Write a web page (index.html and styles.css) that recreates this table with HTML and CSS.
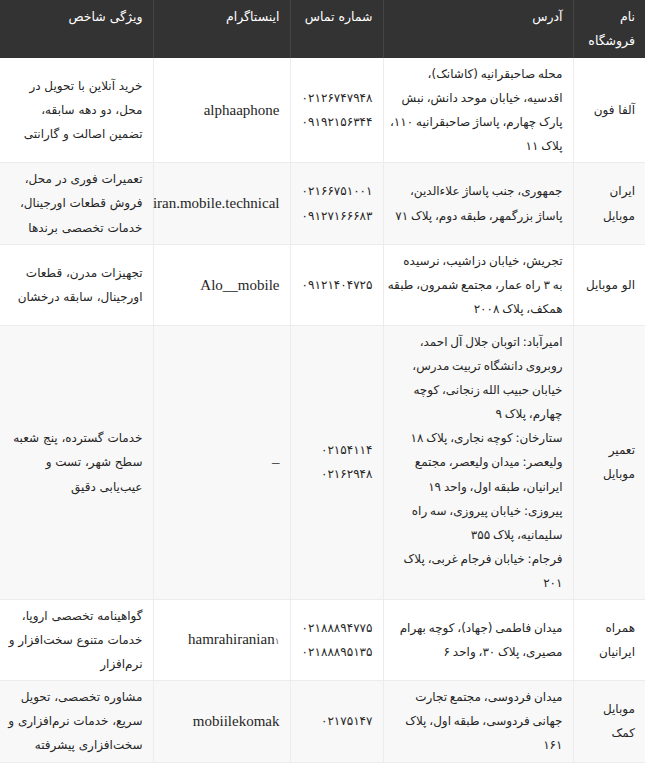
FILE: index.html
```html
<!DOCTYPE html>
<html lang="fa" dir="rtl">
<head>
<meta charset="utf-8">
<title>فروشگاه‌های موبایل</title>
<link rel="stylesheet" href="styles.css">
</head>
<body>
<table class="shops">
  <colgroup>
    <col class="col-name">
    <col class="col-addr">
    <col class="col-phone">
    <col class="col-insta">
    <col class="col-feat">
  </colgroup>
  <thead>
    <tr>
      <th>نام فروشگاه</th>
      <th>آدرس</th>
      <th>شماره تماس</th>
      <th>اینستاگرام</th>
      <th>ویژگی شاخص</th>
    </tr>
  </thead>
  <tbody>
    <tr>
      <td>آلفا فون</td>
      <td class="addr">محله صاحبقرانیه (کاشانک)،<br>اقدسیه، خیابان موحد دانش، نبش<br>پارک چهارم، پاساژ صاحبقرانیه ۱۱۰،<br>پلاک ۱۱</td>
      <td class="phone">۰۲۱۲۶۷۴۷۹۴۸<br>۰۹۱۹۲۱۵۶۳۴۴</td>
      <td class="insta">alphaaphone</td>
      <td>خرید آنلاین با تحویل در<br>محل، دو دهه سابقه،<br>تضمین اصالت و گارانتی</td>
    </tr>
    <tr>
      <td>ایران<br>موبایل</td>
      <td class="addr">جمهوری، جنب پاساژ علاءالدین،<br>پاساژ بزرگمهر، طبقه دوم، پلاک ۷۱</td>
      <td class="phone">۰۲۱۶۶۷۵۱۰۰۱<br>۰۹۱۲۷۱۶۶۶۸۳</td>
      <td class="insta">iran.mobile.technical</td>
      <td>تعمیرات فوری در محل،<br>فروش قطعات اورجینال،<br>خدمات تخصصی برندها</td>
    </tr>
    <tr>
      <td>الو موبایل</td>
      <td class="addr">تجریش، خیابان دزاشیب، نرسیده<br>به ۳ راه عمار، مجتمع شمرون، طبقه<br>همکف، پلاک ۲۰۰۸</td>
      <td class="phone">۰۹۱۲۱۴۰۴۷۲۵</td>
      <td class="insta">Alo__mobile</td>
      <td>تجهیزات مدرن، قطعات<br>اورجینال، سابقه درخشان</td>
    </tr>
    <tr>
      <td>تعمیر<br>موبایل</td>
      <td class="addr">امیرآباد: اتوبان جلال آل احمد،<br>روبروی دانشگاه تربیت مدرس،<br>خیابان حبیب الله زنجانی، کوچه<br>چهارم، پلاک ۹<br>ستارخان: کوچه نجاری، پلاک ۱۸<br>ولیعصر: میدان ولیعصر، مجتمع<br>ایرانیان، طبقه اول، واحد ۱۹<br>پیروزی: خیابان پیروزی، سه راه<br>سلیمانیه، پلاک ۳۵۵<br>فرجام: خیابان فرجام غربی، پلاک<br>۲۰۱</td>
      <td class="phone">۰۲۱۵۴۱۱۴<br>۰۲۱۶۲۹۴۸</td>
      <td class="insta">–</td>
      <td>خدمات گسترده، پنج شعبه<br>سطح شهر، تست و<br>عیب‌یابی دقیق</td>
    </tr>
    <tr>
      <td>همراه<br>ایرانیان</td>
      <td class="addr">میدان فاطمی (جهاد)، کوچه بهرام<br>مصیری، پلاک ۳۰، واحد ۶</td>
      <td class="phone">۰۲۱۸۸۸۹۴۷۷۵<br>۰۲۱۸۸۸۹۵۱۳۵</td>
      <td class="insta">hamrahiranian<span class="mark">۱</span></td>
      <td>گواهینامه تخصصی اروپا،<br>خدمات متنوع سخت‌افزار و<br>نرم‌افزار</td>
    </tr>
    <tr>
      <td>موبایل<br>کمک</td>
      <td class="addr">میدان فردوسی، مجتمع تجارت<br>جهانی فردوسی، طبقه اول، پلاک<br>۱۶۱</td>
      <td class="phone">۰۲۱۷۵۱۴۷</td>
      <td class="insta">mobiilekomak</td>
      <td>مشاوره تخصصی، تحویل<br>سریع، خدمات نرم‌افزاری و<br>سخت‌افزاری پیشرفته</td>
    </tr>
  </tbody>
</table>
</body>
</html>
```
FILE: styles.css
```css
html, body {
  margin: 0;
  padding: 0;
  background: #ffffff;
}

body {
  font-family: "DejaVu Sans", "Noto Sans", sans-serif;
  color: #262626;
}

.shops {
  width: 645px;
  border-collapse: collapse;
  table-layout: fixed;
  font-size: 12px;
  line-height: 24.1px;
}

.col-name { width: 72px; }
.col-addr { width: 190px; }
.col-phone { width: 93px; }
.col-insta { width: 137px; }
.col-feat { width: 153px; }

.shops th {
  background: #333333;
  color: #ffffff;
  font-weight: normal;
  font-size: 12.5px;
  text-align: right;
  vertical-align: top;
  padding: 5px 10px 5px 8px;
  border-left: 1px solid #454545;
  line-height: 24px;
}

.shops th:last-child {
  border-left: none;
}

.shops td {
  text-align: right;
  vertical-align: middle;
  padding: 4px 10px 4px 2px;
  border: 1px solid #ececec;
  border-top: none;
  white-space: nowrap;
}

.shops tbody tr:nth-child(even) td {
  background: #f8f8f8;
}

.shops td:first-child {
  border-right: none;
}

.shops td:last-child {
  border-left: none;
}

.shops td.addr {
  word-spacing: -1px;
}

.shops td.phone {
  font-size: 12px;
}

.shops td.insta {
  font-family: "Liberation Serif", "DejaVu Serif", serif;
  font-size: 15px;
}

.mark {
  font-family: "DejaVu Sans", sans-serif;
  font-size: 9px;
  color: #666666;
}
```
